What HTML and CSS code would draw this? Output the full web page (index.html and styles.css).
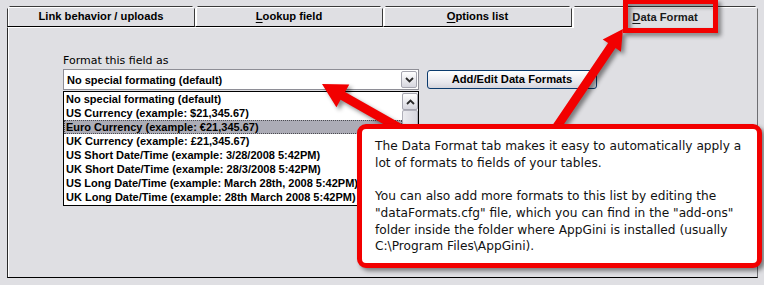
FILE: index.html
```html
<!DOCTYPE html>
<html>
<head>
<meta charset="utf-8">
<link rel="stylesheet" href="styles.css">
</head>
<body>
<div class="window">
  <div class="tabs">
    <div class="tab">Link behavior / uploads</div>
    <div class="tab"><u>L</u>ookup field</div>
    <div class="tab t3"><u>O</u>ptions list</div>
    <div class="tab active"><u>D</u>ata Format</div>
  </div>
  <div class="panel">
    <div class="field">
      <div class="label">Format this field as</div>
      <div class="row">
        <div class="combo">
          <span class="combo-text">No special formating (default)</span>
          <span class="drop"><svg width="9" height="6" viewBox="0 0 9 6"><path d="M1 1 L4.5 4.5 L8 1" fill="none" stroke="#2a2a2a" stroke-width="1.8"/></svg></span>
        </div>
        <div class="btn">Add/Edit Data Formats</div>
      </div>
      <div class="list">
        <div class="items">
          <div class="item">No special formating (default)</div>
          <div class="item">US Currency (example: $21,345.67)</div>
          <div class="item sel">Euro Currency (example: €21,345.67)</div>
          <div class="item">UK Currency (example: £21,345.67)</div>
          <div class="item">US Short Date/Time (example: 3/28/2008 5:42PM)</div>
          <div class="item">UK Short Date/Time (example: 28/3/2008 5:42PM)</div>
          <div class="item">US Long Date/Time (example: March 28th, 2008 5:42PM)</div>
          <div class="item">UK Long Date/Time (example: 28th March 2008 5:42PM)</div>
        </div>
        <div class="scroll">
          <div class="sbtn"><svg width="9" height="6" viewBox="0 0 9 6"><path d="M1 5 L4.5 1.5 L8 5" fill="none" stroke="#2a2a2a" stroke-width="1.8"/></svg></div>
          <div class="thumb"></div>
        </div>
      </div>
    </div>
  </div>
</div>

<div class="callout">
  <p>The Data Format tab makes it easy to automatically apply a<br>lot of formats to fields of your tables.</p>
  <p>You can also add more formats to this list by editing the<br>"dataFormats.cfg" file, which you can find in the "add-ons"<br>folder inside the folder where AppGini is installed (usually<br>C:\Program Files\AppGini).</p>
</div>

<svg class="overlay" width="764" height="285" viewBox="0 0 764 285">
  <g class="marks">
    <rect x="625.5" y="1.5" width="90" height="29" fill="none" stroke="#f20000" stroke-width="5"/>
    <polygon fill="#f20000" points="412.2,130.1 345.1,91.9 349.3,84.5 322,84 336.4,107.2 340.6,99.8 407.8,137.9"/>
    <polygon fill="#f20000" points="559.7,130.5 615.5,48.1 620.9,51.8 623,29 602.7,39.4 608.1,43.1 552.3,125.5"/>
  </g>
</svg>
</body>
</html>
```

FILE: styles.css
```css
html, body {
  margin: 0;
  padding: 0;
}
body {
  width: 764px;
  height: 285px;
  background: #dfdfe3;
  position: relative;
  overflow: hidden;
  font-family: "Liberation Sans", Arial, sans-serif;
  color: #000;
}
.window {
  padding: 6px 0 0 7px;
}
.tabs {
  display: flex;
  height: 21px;
}
.tab {
  box-sizing: border-box;
  width: 188px;
  height: 21px;
  border: 1px solid #3a3a3a;
  border-bottom-color: #000;
  box-shadow: inset 1px 1px 0 #fff;
  background: #dfdfe3;
  font-weight: bold;
  font-size: 11.2px;
  line-height: 19px;
  text-align: center;
  clip-path: polygon(0 3px, 3px 0, calc(100% - 3px) 0, 100% 3px, 100% 100%, 0 100%);
}
.tab + .tab {
  border-left-color: #fff;
}
.tab.t3 {
  width: 189px;
}
.tab.active {
  width: 186px;
  height: 22px;
  border-bottom: none;
  border-right-color: #707070;
  position: relative;
  z-index: 1;
  line-height: 20px;
  color: #1a1a1a;
}
.tab u {
  text-decoration-thickness: 1px;
  text-underline-offset: 2px;
}
.panel {
  box-sizing: border-box;
  width: 751px;
  height: 251px;
  border: 1px solid #fff;
  border-left-color: #2a2a2a;
  border-right-color: #6e6e72;
  border-bottom-color: #000;
  box-shadow: inset 1px 0 0 #fff;
  padding: 26px 0 0 55px;
}
.field {
  display: flex;
  flex-direction: column;
  width: 534px;
}
.label {
  font-family: "DejaVu Sans", Verdana, sans-serif;
  font-size: 11px;
  line-height: 14px;
  height: 14px;
  margin-bottom: 1px;
}
.row {
  display: flex;
  align-items: flex-start;
  gap: 8px;
}
.combo {
  box-sizing: border-box;
  width: 356px;
  height: 21px;
  border: 1px solid #8e8e96;
  background: #fff;
  display: flex;
  align-items: center;
  justify-content: space-between;
  padding: 0 1px 0 3px;
  font-weight: bold;
  font-size: 11px;
}
.drop, .sbtn {
  box-sizing: border-box;
  width: 16px;
  height: 17px;
  border: 1px solid #a6a6b0;
  border-radius: 2px;
  background: linear-gradient(#ffffff, #d6d6de);
  display: flex;
  align-items: center;
  justify-content: center;
}
.btn {
  box-sizing: border-box;
  width: 170px;
  height: 19px;
  margin-top: 1px;
  border: 1px solid #0b3b6e;
  border-radius: 3px;
  background: linear-gradient(#ffffff, #e6e6ec 70%, #d4d4dc);
  font-weight: bold;
  font-size: 11.2px;
  line-height: 17px;
  text-align: center;
}
.list {
  box-sizing: border-box;
  width: 356px;
  height: 115px;
  margin-top: 1px;
  border: 1px solid #000;
  background: #fff;
  display: flex;
}
.items {
  flex: 1;
  padding-top: 0;
  overflow: hidden;
}
.item {
  box-sizing: border-box;
  height: 14px;
  line-height: 14px;
  padding-left: 2px;
  font-weight: bold;
  font-size: 11px;
  white-space: nowrap;
}
.item.sel {
  background: #acacb6;
  outline: 1px dotted #4a4a50;
  outline-offset: -1px;
}
.scroll {
  width: 16px;
  background: #ededf0;
  display: flex;
  flex-direction: column;
  padding: 1px 0 0 0;
}
.thumb {
  box-sizing: border-box;
  height: 30px;
  border: 1px solid #b0b0ba;
  border-radius: 2px;
  background: linear-gradient(90deg, #ececf0, #d6d6de);
}
.callout {
  position: absolute;
  left: 357px;
  top: 124px;
  box-sizing: border-box;
  width: 405px;
  height: 144px;
  border: 5px solid #f20000;
  border-radius: 9px;
  background: #fff;
  box-shadow: 3px 3px 4px rgba(0, 0, 0, 0.45);
  padding: 9px 0 0 13px;
  font-family: "DejaVu Sans", Verdana, sans-serif;
  font-size: 12.2px;
  line-height: 16.7px;
  color: #111;
  white-space: nowrap;
  z-index: 2;
}
.callout p {
  margin: 0 0 16.7px 0;
}
.overlay {
  position: absolute;
  left: 0;
  top: 0;
  z-index: 1;
  pointer-events: none;
}
.marks {
  filter: drop-shadow(3px 3px 2px rgba(0, 0, 0, 0.45));
}
```
